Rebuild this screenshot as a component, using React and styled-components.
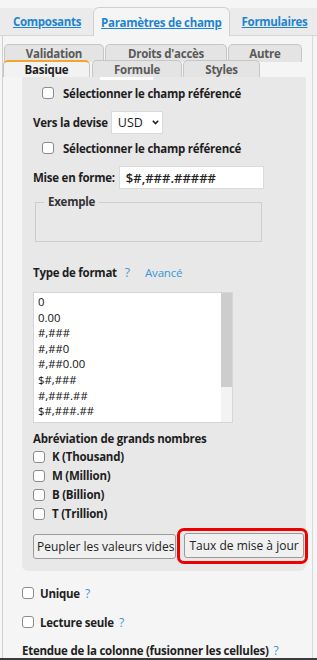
import React from 'react';
import styled, { createGlobalStyle } from 'styled-components';

const GlobalStyle = createGlobalStyle`
  html, body {
    margin: 0;
    padding: 0;
    background: #f5f5f5;
    font-family: "Open Sans", "Liberation Sans", sans-serif;
    color: #222;
  }
`;

const Page = styled.div`
  width: 317px;
  height: 660px;
  box-sizing: border-box;
  display: flex;
  flex-direction: column;
  overflow: hidden;
  border-bottom: 2px solid #3c3c3c;
`;

const TopBar = styled.div`
  display: flex;
  align-items: flex-end;
  height: 36px;
  flex-shrink: 0;
`;

const TopTab = styled.div`
  box-sizing: border-box;
  height: ${(p) => (p.$active ? '29px' : '28px')};
  display: flex;
  align-items: center;
  padding: ${(p) => p.$pad};
  background: ${(p) => (p.$active ? '#f5f5f5' : '#ebebeb')};
  border: ${(p) => (p.$active ? '1px solid #cfcfcf' : 'none')};
  border-bottom: ${(p) => (p.$active ? 'none' : '1px solid #d6d6d6')};
  border-radius: ${(p) => (p.$active ? '6px 6px 0 0' : '0')};
  flex: ${(p) => (p.$grow ? 1 : 'none')};
  font-size: 11.5px;
  letter-spacing: -0.3px;
  font-weight: 700;
  color: #1f84cf;
  text-decoration: underline;
  white-space: nowrap;
`;

const Frame = styled.div`
  flex: 1;
  margin: 0 4px 0 2px;
  border-left: 1px solid #cfcfcf;
  border-right: 1px solid #d8d8d8;
  display: flex;
  flex-direction: column;
`;

const SubTabs = styled.div`
  display: flex;
  margin: ${(p) => p.$margin};
  position: relative;
  z-index: ${(p) => p.$z};
`;

const SubTab = styled.div`
  box-sizing: border-box;
  width: ${(p) => p.$w}px;
  height: ${(p) => p.$h}px;
  margin-right: ${(p) => p.$gap}px;
  display: flex;
  align-items: center;
  justify-content: center;
  background: ${(p) => (p.$active ? '#f2f2f2' : '#e4e4e4')};
  border: 1px solid #c6c6c6;
  border-top: ${(p) => (p.$active ? '2px solid #f2a531' : '1px solid #c6c6c6')};
  border-bottom: none;
  border-radius: 5px 5px 0 0;
  font-size: 11.5px;
  letter-spacing: -0.25px;
  font-weight: 700;
  color: ${(p) => (p.$active ? '#1e1e1e' : '#5a5a5a')};
  white-space: nowrap;
`;

const Panel = styled.div`
  margin: 0 6px 0 19px;
  background: #e8e8e8;
  border-radius: 0 0 6px 6px;
  padding: 0 4px 7px 11px;
  display: flex;
  flex-direction: column;
`;

const TopSliver = styled.div`
  width: 53px;
  height: 3px;
  margin-left: 67px;
  background: #fff;
`;

const Row = styled.div`
  display: flex;
  align-items: center;
  height: ${(p) => p.$h || 20}px;
  margin-top: ${(p) => p.$mt || 0}px;
  padding-left: ${(p) => p.$indent || 0}px;
`;

const Check = styled.input.attrs({ type: 'checkbox' })`
  appearance: none;
  -webkit-appearance: none;
  box-sizing: border-box;
  width: 12px;
  height: 12px;
  margin: 0 ${(p) => p.$space || 7}px 0 0;
  border: 1px solid #8c8c8c;
  border-radius: 3px;
  background: #fff;
  flex-shrink: 0;
`;

const Label = styled.span`
  font-size: 11.5px;
  letter-spacing: -0.25px;
  font-weight: 700;
  color: #1e1e1e;
  white-space: nowrap;
  margin-right: ${(p) => p.$mr || 0}px;
`;

const Help = styled.span`
  font-size: 12px;
  color: #3a97d6;
  margin-left: ${(p) => p.$ml || 5}px;
`;

const Link = styled.span`
  font-size: 11.5px;
  letter-spacing: -0.2px;
  color: #3a97d6;
  margin-left: 15px;
`;

const Select = styled.div`
  box-sizing: border-box;
  width: 52px;
  height: 23px;
  background: #fff;
  border: 1px solid #dadada;
  display: flex;
  align-items: center;
  padding-left: 6px;
  gap: 9px;
  font-size: 12.5px;
  color: #222;
`;

const TextInput = styled.div`
  box-sizing: border-box;
  width: 145px;
  height: 23px;
  background: #fff;
  border: 1px solid #dadada;
  display: flex;
  align-items: center;
  padding-left: 6px;
  font-size: 13px;
  font-weight: 600;
  color: #222;
`;

const Fieldset = styled.fieldset`
  box-sizing: border-box;
  width: 227px;
  margin: 5px 0 0 2px;
  padding: 0 8px;
  border: 1px solid #cdcdcd;
  border-radius: 0;
`;

const Legend = styled.legend`
  padding: 0 4px;
  font-size: 11.5px;
  letter-spacing: -0.25px;
  font-weight: 700;
  line-height: 16px;
  color: #333;
`;

const FieldBody = styled.div`
  height: 31px;
`;

const ListBox = styled.div`
  box-sizing: border-box;
  width: 200px;
  height: 131px;
  margin-top: 11px;
  background: #fff;
  border: 1px solid #d6d6d6;
  display: flex;
`;

const ListItems = styled.div`
  flex: 1;
  padding: 1px 0 0 4px;
  font-size: 11.3px;
  line-height: 15.6px;
  color: #111;
  overflow: hidden;
`;

const ScrollTrack = styled.div`
  width: 11px;
  background: #f3f3f3;
  display: flex;
  flex-direction: column;
`;

const ScrollThumb = styled.div`
  height: 94px;
  background: #cdcdcd;
`;

const ButtonRow = styled.div`
  display: flex;
  align-items: center;
  margin-top: 5px;
`;

const Button = styled.button`
  box-sizing: border-box;
  flex-shrink: 0;
  height: 25px;
  padding: ${(p) => p.$pad};
  background: #f0f0f0;
  border: 1px solid #9a9a9a;
  border-radius: 3px;
  font-family: inherit;
  font-size: 12px;
  color: #222;
  white-space: nowrap;
`;

const Highlight = styled.div`
  display: flex;
  flex-shrink: 0;
  padding: 2px 1px 3px 4px;
  margin-left: 1px;
  border: 3px solid #ee0000;
  border-radius: 7px;
`;

const Outside = styled.div`
  display: flex;
  flex-direction: column;
  padding-left: 19px;
`;

const Chevron = () => (
  <svg width="7" height="5" viewBox="0 0 7 5">
    <path d="M0.8 0.8 L3.5 3.6 L6.2 0.8" fill="none" stroke="#222" strokeWidth="1.5" />
  </svg>
);

const formats = ['0', '0.00', '#,###', '#,##0', '#,##0.00', '$#,###', '#,###.##', '$#,###.##'];
const abbrev = ['K (Thousand)', 'M (Million)', 'B (Billion)', 'T (Trillion)'];

export default function App() {
  return (
    <Page>
      <GlobalStyle />
      <TopBar>
        <TopTab $pad="0 12px 0 13px">Composants</TopTab>
        <TopTab $active $pad="0 7px">Paramètres de champ</TopTab>
        <TopTab $grow $pad="0 0 0 12px">Formulaires</TopTab>
      </TopBar>

      <Frame>
        <SubTabs $margin="8px 0 0 1px" $z={1}>
          <SubTab $w={100} $h={18} $gap={1}>Validation</SubTab>
          <SubTab $w={122} $h={18} $gap={1}>Droits d'accès</SubTab>
          <SubTab $w={74} $h={18} $gap={0}>Autre</SubTab>
        </SubTabs>
        <SubTabs $margin="-2px 0 0 0" $z={2}>
          <SubTab $active $w={87} $h={17} $gap={2}>Basique</SubTab>
          <SubTab $w={90} $h={17} $gap={1}>Formule</SubTab>
          <SubTab $w={77} $h={17} $gap={0}>Styles</SubTab>
        </SubTabs>

        <Panel>
          <TopSliver />
          <Row $mt={3} $indent={9}>
            <Check $space={9} />
            <Label>Sélectionner le champ référencé</Label>
          </Row>
          <Row $mt={8} $h={23}>
            <Label $mr={3}>Vers la devise</Label>
            <Select>
              USD <Chevron />
            </Select>
          </Row>
          <Row $mt={4} $indent={9}>
            <Check $space={9} />
            <Label>Sélectionner le champ référencé</Label>
          </Row>
          <Row $mt={8} $h={23}>
            <Label $mr={4}>Mise en forme:</Label>
            <TextInput>$#,###.#####</TextInput>
          </Row>
          <Fieldset>
            <Legend>Exemple</Legend>
            <FieldBody />
          </Fieldset>
          <Row $mt={21} $h={18}>
            <Label>Type de format</Label>
            <Help $ml={8}>?</Help>
            <Link>Avancé</Link>
          </Row>
          <ListBox>
            <ListItems>
              {formats.map((f) => (
                <div key={f}>{f}</div>
              ))}
            </ListItems>
            <ScrollTrack>
              <ScrollThumb />
            </ScrollTrack>
          </ListBox>
          <Row $mt={6} $h={18}>
            <Label>Abréviation de grands nombres</Label>
          </Row>
          {abbrev.map((a) => (
            <Row key={a} $h={19}>
              <Check $space={7} />
              <Label>{a}</Label>
            </Row>
          ))}
          <ButtonRow>
            <Button $pad="0 1px 0 3px">Peupler les valeurs vides</Button>
            <Highlight>
              <Button $pad="0 4px">Taux de mise à jour</Button>
            </Highlight>
          </ButtonRow>
        </Panel>

        <Outside>
          <Row $mt={12}>
            <Check $space={6} />
            <Label>Unique</Label>
            <Help>?</Help>
          </Row>
          <Row $mt={9}>
            <Check $space={6} />
            <Label>Lecture seule</Label>
            <Help>?</Help>
          </Row>
          <Row $mt={9} $h={18}>
            <Label>Etendue de la colonne (fusionner les cellules)</Label>
            <Help>?</Help>
          </Row>
        </Outside>
      </Frame>
    </Page>
  );
}
